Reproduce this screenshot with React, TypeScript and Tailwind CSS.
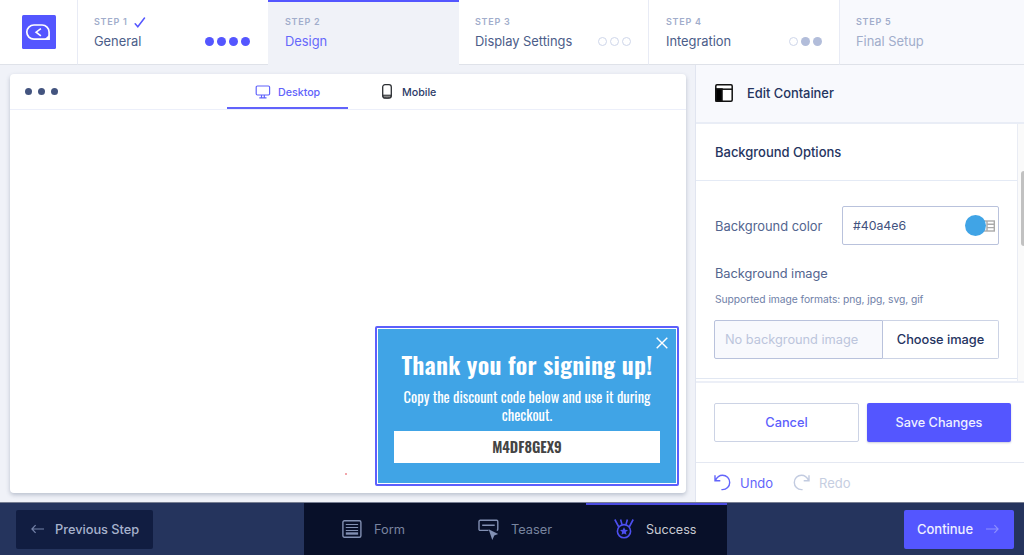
import type { ReactNode } from 'react';

const dotStyles = {
  done: 'bg-[#5456ff]',
  filled: 'bg-[#b2bdda]',
  empty: 'border-[1.5px] border-[#ced6ea]',
};

type Dot = keyof typeof dotStyles;

function Dots({ items }: { items: Dot[] }) {
  return (
    <div className="mb-[5px] ml-auto flex gap-[3px] self-end">
      {items.map((d, i) => (
        <span key={i} className={`size-[9px] rounded-full ${dotStyles[d]}`} />
      ))}
    </div>
  );
}

function Step({ n, title, className, titleClass, dots, done }: { n: number; title: string; className: string; titleClass: string; dots?: Dot[]; done?: boolean }) {
  return (
    <div className={`flex h-[65px] ${className}`}>
      <div>
        <div className="mt-[15px] flex h-[14px] items-center text-[9px] font-semibold tracking-[0.75px] text-[#a1adcb]">
          STEP {n}
          {done && (
            <svg className="ml-[6px]" width="12" height="11" viewBox="0 0 12 11" fill="none" stroke="#5456ff" strokeWidth="1.5" strokeLinecap="round">
              <path d="M1.2 6.8 3.8 9.8 10.5 1" />
            </svg>
          )}
        </div>
        <div className={`mt-1 h-[18px] whitespace-nowrap text-[12.9px] leading-[18px] ${titleClass}`}>{title}</div>
      </div>
      {dots && <div className="ml-auto flex h-[51px]"><Dots items={dots} /></div>}
    </div>
  );
}

function FooterTab({ label, icon, className }: { label: string; icon: ReactNode; className: string }) {
  return (
    <div className={`flex h-full items-center ${className}`}>
      {icon}
      <span className="mt-[2px]">{label}</span>
    </div>
  );
}

function Header() {
  return (
    <header className="relative z-10 flex h-[66px] shrink-0">
      <div className="flex h-[65px] w-[78px] justify-center border-r border-b border-r-[#e8ebf5] border-b-[#dfe2e9] bg-white pt-[15px]">
        <svg width="34" height="34" viewBox="0 0 34 34" fill="none">
          <rect width="34" height="34" rx="1.5" fill="#5456ff" />
          <path d="M11.9 10h8.2a7 7 0 0 1 7 7v7.2H11.9a7.1 7.1 0 0 1 0-14.2Z" stroke="#fff" strokeWidth="1.7" />
          <path d="m22.5 24.2 4.6-4.2v4.2Z" fill="#fff" />
          <path d="m18.9 13.6-4.8 3.6 4.8 3.6" stroke="#fff" strokeWidth="1.6" />
        </svg>
      </div>
      <Step n={1} title="General" done dots={['done', 'done', 'done', 'done']} className="w-[190px] border-b border-b-[#dfe2e9] bg-white pr-[18px] pl-[16px]" titleClass="text-[#4b5d89]" />
      <Step n={2} title="Design" className="w-[191px] bg-[#f0f2f8] pl-[17px] shadow-[inset_0_2px_0_#5456ff]" titleClass="text-[#6668fb]" />
      <Step n={3} title="Display Settings" dots={['empty', 'empty', 'empty']} className="w-[190px] border-r border-b border-r-[#e8ebf5] border-b-[#dfe2e9] bg-white pr-[17px] pl-[16px]" titleClass="text-[#4b5d89]" />
      <Step n={4} title="Integration" dots={['empty', 'filled', 'filled']} className="w-[191px] border-r border-b border-r-[#e8ebf5] border-b-[#dfe2e9] bg-white pr-[17px] pl-[17px]" titleClass="text-[#4b5d89]" />
      <Step n={5} title="Final Setup" className="flex-1 border-b border-[#dfe2e9] bg-[#f8f9fd] pl-[16px]" titleClass="text-[#a1adcb]" />
    </header>
  );
}

function Popup() {
  return (
    <div className="absolute right-[7px] bottom-[7px] h-[160px] w-[304px] rounded-[2px] border-2 border-[#5d5ffc] bg-white p-px">
      <div className="relative flex h-full flex-col items-center bg-[#40a4e6] pt-[18px] text-center font-['Oswald','Roboto_Condensed',sans-serif] text-white">
        <svg className="absolute top-[8px] right-[8px]" width="12" height="12" viewBox="0 0 12 12" stroke="#fff" strokeWidth="1.4">
          <path d="m.7.7 10.6 10.6M11.3.7.7 11.3" />
        </svg>
        <h1 className="h-[35px] text-[24.4px] leading-[35px] font-semibold tracking-[0.25px] whitespace-nowrap">Thank you for signing up!</h1>
        <p className="mt-[6px] w-[264px] text-[14.5px] leading-[17.5px] font-normal tracking-normal">Copy the discount code below and use it during checkout.</p>
        <div className="mt-[8px] h-[32px] w-[266px] bg-white text-[14.6px] leading-[32px] font-semibold tracking-normal text-[#444]">M4DF8GEX9</div>
      </div>
    </div>
  );
}

function Preview() {
  return (
    <main className="relative ml-[10px] mt-[8px] h-[419px] w-[676px] shrink-0 rounded-[4px] bg-white shadow-[0_2px_4px_rgba(60,75,110,0.3)]">
      <div className="flex h-[36px] border-b border-[#eceffa] text-[10.7px] font-medium">
        <div className="flex w-[217px] items-center gap-[6px] pl-[15px]">
          <span className="size-[7px] rounded-full bg-[#43547f]" />
          <span className="size-[7px] rounded-full bg-[#43547f]" />
          <span className="size-[7px] rounded-full bg-[#43547f]" />
        </div>
        <div className="flex h-[35px] w-[121px] items-center border-b-2 border-[#6163fb] pl-[28px] text-[#6163fb]">
          <svg className="mr-[7px] mt-[2px]" width="16" height="14" viewBox="0 0 16 14" fill="none" stroke="currentColor" strokeWidth="1.2">
            <rect x="1.2" y="1" width="13.4" height="9" rx="1.2" />
            <path d="M6.5 10v2.8M9.3 10v2.8M4.3 12.9h7.2" />
          </svg>
          <span className="mt-[5px]">Desktop</span>
        </div>
        <div className="flex h-[35px] items-center pl-[34px] text-[#2c3b67]">
          <svg className="mr-[10px]" width="10" height="15" viewBox="0 0 10 15" fill="none" stroke="#2c2f33" strokeWidth="1.3">
            <rect x=".7" y=".7" width="8.6" height="13.4" rx="2.3" />
            <path d="M1 11.2h8v1.3q-1 1.5-4 1.5T1 12.5Z" fill="#888" strokeWidth="1" />
          </svg>
          <span className="mt-[3px]">Mobile</span>
        </div>
      </div>
      <span className="absolute bottom-[18px] left-[335px] h-[2px] w-[2px] bg-[#f3a6ab]" />
      <Popup />
    </main>
  );
}

function Sidebar() {
  return (
    <aside className="-mt-px ml-auto flex h-[437px] w-[329px] flex-col border-l border-[#e1e5f0] bg-white text-[#53658f]">
      <div className="flex h-[59px] shrink-0 items-center border-b-2 border-[#e9edf6] bg-[#f8f9fd] pl-[19px] text-[12.9px] font-medium text-[#25345f]">
        <svg className="mr-[14px] -mt-px" width="18" height="18" viewBox="0 0 18 18" fill="none" stroke="#111" strokeWidth="1.5">
          <rect x=".8" y=".8" width="16.4" height="16.4" rx="1.2" fill="white" />
          <path d="M1 5.2h16" />
          <path d="M1 5h6v12H1Z" fill="#000" />
        </svg>
        <span className="mt-px">Edit Container</span>
      </div>
      <div className="flex h-[257px] shrink-0">
        <div className="w-[322px] shrink-0 border-r border-[#e9ecf4]">
          <div className="flex h-[57px] items-center border-b border-[#e4eaf5] pt-px pl-[19px] text-[13px] font-medium text-[#25345f]">Background Options</div>
          <div className="flex h-[198px] flex-col border-b border-[#e1e7f2] pt-[25px] pl-[18px]">
            <div className="flex h-[39px] items-center">
              <span className="mt-[2px] w-[128px] pl-px text-[12.9px]">Background color</span>
              <div className="flex h-[39px] w-[157px] items-center rounded-[2px] border border-[#b9c2dc] pl-[10px] text-[12.3px] text-[#42527e]">
                <span className="mt-px">#40a4e6</span>
                <span className="z-10 ml-auto size-[21px] rounded-full bg-[#40a4e6]" />
                <svg className="mr-[3px] -ml-[3px]" width="12" height="12" viewBox="0 0 12 12" fill="none" stroke="#aaa" strokeWidth="1.4">
                  <rect x=".7" y="1" width="10.6" height="10" />
                  <path d="M4 1v10M4 4.3h7M4 7.6h7" />
                </svg>
              </div>
            </div>
            <div className="mt-[20px] h-[18px] pl-px text-[12.8px] leading-[18px]">Background image</div>
            <div className="mt-[8px] h-[16px] pl-px text-[10.3px] leading-[16px] tracking-[-0.06px] text-[#7081a8]">Supported image formats: png, jpg, svg, gif</div>
            <div className="mt-[13px] flex h-[39px] w-[285px]">
              <div className="flex w-[169px] items-center rounded-l-[2px] border border-[#b9c2dc] bg-[#f8f9fd] pt-px pl-[10px] text-[12.8px] text-[#bcc5dc]">No background image</div>
              <div className="flex w-[116px] items-center justify-center rounded-r-[2px] border border-l-0 border-[#ccd3e5] pt-px font-medium text-[#25345f]">Choose image</div>
            </div>
          </div>
        </div>
        <div className="flex flex-1 justify-end bg-[#fafafa]">
          <div className="mt-[47px] h-[75px] w-[3px] rounded-l-full bg-[#c1c1c1]" />
        </div>
      </div>
      <div className="flex h-[82px] shrink-0 gap-[8px] border-t-2 border-b border-t-[#eceff7] border-b-[#e4e8f2] pt-[20px] pl-[18px] font-medium">
        <button className="h-[39px] w-[145px] rounded-[2px] border border-[#ccd3e5] text-[#5c5efc]">Cancel</button>
        <button className="h-[39px] w-[144px] rounded-[2px] bg-[#5456ff] text-[12.7px] text-[#eff0ff] shadow-[0_1px_2px_rgba(80,85,140,0.3)]">Save Changes</button>
      </div>
      <div className="flex h-[39px] items-center pl-[18px]">
        <svg width="17" height="17" viewBox="0 0 17 17" fill="none" stroke="#6365fb" strokeWidth="1.4">
          <path d="M1 1.2v5.5h5.3M1.3 6.5C3 3 5.6 1.2 8.5 1.2a7.2 7.2 0 0 1 0 14.4H7.4" />
        </svg>
        <span className="mt-[2px] ml-[9px] w-[53px] text-[13px] text-[#6365fb]">Undo</span>
        <svg width="17" height="17" viewBox="0 0 17 17" fill="none" stroke="#c2cbe0" strokeWidth="1.4">
          <path d="M16 1.2v5.5h-5.3M15.7 6.5C14 3 11.4 1.2 8.5 1.2a7.2 7.2 0 0 0 0 14.4h1.1" />
        </svg>
        <span className="mt-[2px] ml-[9px] text-[13px] text-[#c6cee1]">Redo</span>
      </div>
    </aside>
  );
}

function Footer() {
  return (
    <footer className="flex h-[53px] shrink-0 border-t border-[#777e92] bg-[#25345d]">
      <div className="w-[304px] pt-[7px] pl-4">
        <button className="flex h-[39px] w-[137px] items-center rounded-[2px] bg-[#111d41] pl-[15px] text-[12.8px] font-medium tracking-[-0.02px] whitespace-nowrap text-[#a7b2cd]">
          <svg className="-mt-px mr-[11px] shrink-0" width="13" height="10" viewBox="0 0 13 10" fill="none" stroke="#7583a9" strokeWidth="1.2"><path d="M13 5H1M4.6 1.2.9 5l3.7 3.8" /></svg>
          <span className="mt-px">Previous Step</span>
        </button>
      </div>
      <nav className="flex w-[423px] bg-[#081029] text-[#78849f]">
        <FooterTab label="Form" className="w-[141px] gap-[12px] pl-[38px]" icon={
          <svg width="20" height="18" viewBox="0 0 20 18" fill="none" stroke="#8290b3" strokeWidth="1.4">
            <rect x=".9" y=".8" width="18" height="16.4" rx="1.5" />
            <path d="M3.8 4.5h12.3M3.8 7.5h12.3M3.8 10.5h12.3" strokeWidth="1.1" />
            <path d="M3.8 13.5h12.3" strokeWidth="2.4" />
          </svg>
        } />
        <FooterTab label="Teaser" className="w-[141px] gap-[12px] pl-[33px]" icon={
          <svg width="21" height="21" viewBox="0 0 21 21" fill="none" stroke="#8290b3" strokeWidth="1.4">
            <path d="M10.5 11.4H2.2A1.2 1.2 0 0 1 1 10.2V2.5a1.2 1.2 0 0 1 1.2-1.2h16.4a1.2 1.2 0 0 1 1.2 1.2v7.7a1.2 1.2 0 0 1-1 1.2M4.2 6.2h12.5" />
            <path d="m10.6 10.2 9.6 4.8-3.9 1.5-2 4.4Z" fill="#8290b3" stroke="none" />
          </svg>
        } />
        <FooterTab label="Success" className="w-[141px] gap-[12px] pl-[28px] text-[12.6px] text-[#c9cbd2] shadow-[inset_0_2px_0_#4a4be0]" icon={
          <svg className="-mt-px" width="20" height="21" viewBox="0 0 20 21" fill="none" stroke="#4d4ff0" strokeWidth="1.6">
            <circle cx="10" cy="13.2" r="6.6" />
            <path d="M.8 1.5 4.8 9M6.6 1.5 8 6.5M13.4 1.5 12 6.5M19.2 1.5 15.2 9" />
            <path d="m10 9.2 1.2 2.6 2.8.3-2.1 1.9.6 2.8-2.5-1.4-2.5 1.4.6-2.8L6 12.1l2.8-.3Z" fill="#4d4ff0" stroke="none" />
          </svg>
        } />
      </nav>
      <div className="flex-1 pt-[7px] pl-[177px]">
        <button className="flex h-[39px] w-[110px] items-center rounded-[2px] bg-[#5456ff] pl-[13px] text-[13px] font-medium text-[#eff0ff]">
          <span className="mt-px">Continue</span>
          <svg className="-mt-px ml-[13px]" width="13" height="10" viewBox="0 0 13 10" fill="none" stroke="#8e90ff" strokeWidth="1.1"><path d="M0 5h12M8.4 1.2 12.1 5 8.4 8.8" /></svg>
        </button>
      </div>
    </footer>
  );
}

export default function App() {
  return (
    <div className="flex h-[555px] w-[1024px] flex-col overflow-hidden bg-[#f0f2f8] font-['Inter','Liberation_Sans',sans-serif] text-[12.8px] tracking-[-0.02px]">
      <Header />
      <div className="flex h-[436px] shrink-0">
        <Preview />
        <Sidebar />
      </div>
      <Footer />
    </div>
  );
}
